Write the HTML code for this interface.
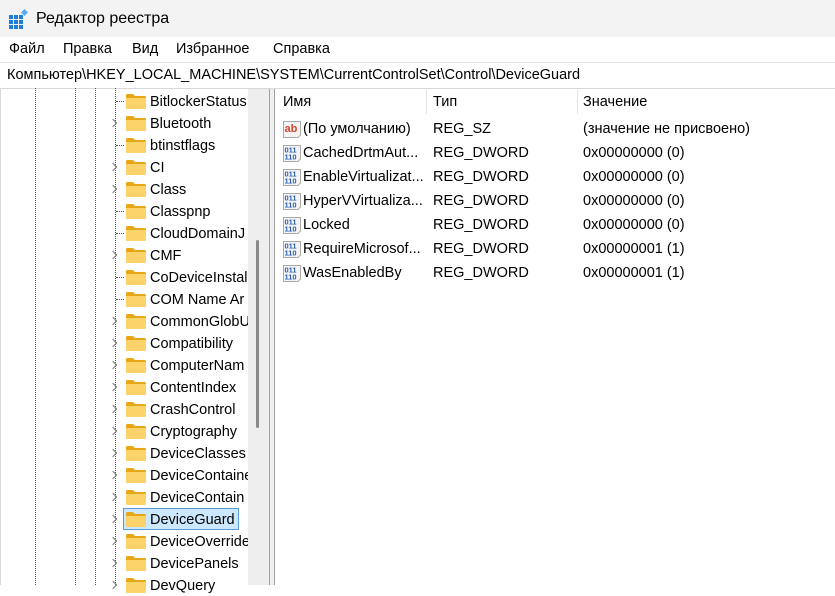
<!DOCTYPE html>
<html><head><meta charset="utf-8"><style>
*{margin:0;padding:0;box-sizing:border-box}
body{width:835px;height:585px;overflow:hidden;background:#fff;font-family:"Segoe UI","Liberation Sans",sans-serif;font-size:14.5px;color:#000;position:relative;white-space:nowrap}
.abs{position:absolute;white-space:nowrap}
#title{left:0;top:0;width:835px;height:37px;background:#f3f3f3}
#menu{left:0;top:37px;width:835px;height:25px;background:#fff}
#addr{left:0;top:62px;width:835px;height:26px;background:#fff;border-top:1px solid #e5e5e5}
.dv{position:absolute;top:88px;height:497px;border-left:1px dotted #555}
.row{position:absolute;left:0;height:22px;line-height:22px}
.fold{position:absolute;left:126px;width:20px;height:15px}
.txt{position:absolute;left:150px;top:1px}
.chev{position:absolute;left:110px;top:8px;width:6px;height:6px;border-right:1.3px solid #777;border-top:1.3px solid #777;transform:rotate(45deg)}
.hl{position:absolute;left:116px;top:11px;width:8px;border-top:1px dotted #555}
.rr{position:absolute;left:283px;width:540px;height:24px;line-height:24px;white-space:nowrap}
.rr span{white-space:nowrap}
</style></head><body>
<div id="title" class="abs">
<svg class="abs" style="left:9px;top:9px" width="20" height="20" viewBox="0 0 20 20"><g fill="#1f7fd6"><rect x="0" y="6" width="4" height="4"/><rect x="5" y="6" width="4" height="4"/><rect x="10" y="6" width="4" height="4"/><rect x="0" y="11" width="4" height="4"/><rect x="5" y="11" width="4" height="4"/><rect x="10" y="11" width="4" height="4"/><rect x="0" y="16" width="4" height="4"/><rect x="5" y="16" width="4" height="4"/><rect x="10" y="16" width="4" height="4"/></g><rect x="13" y="1" width="5" height="5" fill="#5aaaf0" transform="rotate(45 15.5 3.5)"/></svg>
<span class="abs" style="left:36px;top:10px;font-size:16px">Редактор реестра</span></div>
<div id="menu" class="abs"><span class="abs" style="left:9px;top:4px">Файл</span><span class="abs" style="left:63px;top:4px">Правка</span><span class="abs" style="left:132px;top:4px">Вид</span><span class="abs" style="left:176px;top:4px">Избранное</span><span class="abs" style="left:273px;top:4px">Справка</span></div>
<div id="addr" class="abs"><span class="abs" style="left:7px;top:4px">Компьютер\HKEY_LOCAL_MACHINE\SYSTEM\CurrentControlSet\Control\DeviceGuard</span></div>
<div class="abs" style="left:0;top:88px;width:835px;border-top:1px solid #d8d8d8"></div>
<div class="abs" style="left:0;top:88px;height:497px;border-left:1px solid #d8d8d8"></div>
<div class="dv" style="left:35px"></div><div class="dv" style="left:75px"></div><div class="dv" style="left:95px"></div><div class="dv" style="left:115px"></div>
<div id="tree"></div>
<div class="abs" style="left:248px;top:89px;width:21px;height:496px;background:#eeeeee"></div>
<div class="abs" style="left:256px;top:240px;width:3px;height:188px;background:#8a8a8a;border-radius:2px"></div>
<div class="abs" style="left:269px;top:89px;width:1px;height:496px;background:#a0a0a0"></div>
<div class="abs" style="left:270px;top:89px;width:4px;height:496px;background:#f0f0f0"></div>
<div class="abs" style="left:274px;top:89px;width:1px;height:496px;background:#a0a0a0"></div>
<span class="abs" style="left:283px;top:94px">Имя</span>
<div class="abs" style="left:426px;top:90px;height:24px;border-left:1px solid #e5e5e5"></div>
<span class="abs" style="left:433px;top:94px">Тип</span>
<div class="abs" style="left:577px;top:90px;height:24px;border-left:1px solid #e5e5e5"></div>
<span class="abs" style="left:583px;top:94px">Значение</span>
<div id="vals"></div>
<script>
var t=[["BitlockerStatus",0],["Bluetooth",1],["btinstflags",0],["CI",1],["Class",1],["Classpnp",0],["CloudDomainJ",0],["CMF",1],["CoDeviceInstal",0],["COM Name Ar",0],["CommonGlobU",1],["Compatibility",1],["ComputerNam",1],["ContentIndex",1],["CrashControl",1],["Cryptography",1],["DeviceClasses",1],["DeviceContaine",1],["DeviceContain",1],["DeviceGuard",1],["DeviceOverride",1],["DevicePanels",1],["DevQuery",1]];
var f='<svg class="fold" style="top:4px" viewBox="0 0 20 15"><path d="M0 1.5Q0 0 1.5 0H7L9 2H18.5Q20 2 20 3.5V13.5Q20 15 18.5 15H1.5Q0 15 0 13.5Z" fill="#e8a719"/><path d="M0 4H20V13.5Q20 15 18.5 15H1.5Q0 15 0 13.5Z" fill="#fcd36a"/></svg>';
var h='';t.forEach(function(r,i){var y=90+i*22;h+='<div class="row" style="top:'+y+'px;width:248px;overflow:hidden">'+(r[1]?'<div class="chev"></div>':'<div class="hl"></div>')+(r[0]=="DeviceGuard"?'<div style="position:absolute;left:123px;top:0;width:116px;height:22px;background:#cce8ff;border:1px solid #5b9bd5"></div>':'')+f+'<span class="txt">'+r[0]+'</span></div>';});
document.getElementById('tree').innerHTML=h;
var v=[["(По умолчанию)","REG_SZ","(значение не присвоено)",1],["CachedDrtmAut...","REG_DWORD","0x00000000 (0)"],["EnableVirtualizat...","REG_DWORD","0x00000000 (0)"],["HyperVVirtualiza...","REG_DWORD","0x00000000 (0)"],["Locked","REG_DWORD","0x00000000 (0)"],["RequireMicrosof...","REG_DWORD","0x00000001 (1)"],["WasEnabledBy","REG_DWORD","0x00000001 (1)"]];
var ab='<svg style="position:absolute;left:0;top:4px" width="18" height="17" viewBox="0 0 18 17"><path d="M0.5 0.5H17.5V14L15 16.5H0.5Z" fill="#f4f4f4" stroke="#aaa"/><text x="1.5" y="11" font-family="Liberation Sans" font-weight="bold" font-size="11" fill="#d9432b">ab</text></svg>';
var bn='<svg style="position:absolute;left:0;top:4px" width="18" height="17" viewBox="0 0 18 17"><path d="M0.5 0.5H17.5V14L15 16.5H0.5Z" fill="#f4f4f4" stroke="#aaa"/><text x="1.5" y="7.5" font-family="Liberation Sans" font-weight="bold" font-size="7.5" fill="#2a5db0">011</text><text x="1.5" y="14.5" font-family="Liberation Sans" font-weight="bold" font-size="7.5" fill="#2a5db0">110</text></svg>';
h='';v.forEach(function(r,i){var y=117+i*24;h+='<div class="rr" style="top:'+y+'px">'+(r[3]?ab:bn)+'<span style="position:absolute;left:20px">'+r[0]+'</span><span style="position:absolute;left:150px">'+r[1]+'</span><span style="position:absolute;left:300px">'+r[2]+'</span></div>';});
document.getElementById('vals').innerHTML=h;
</script>
</body></html>
